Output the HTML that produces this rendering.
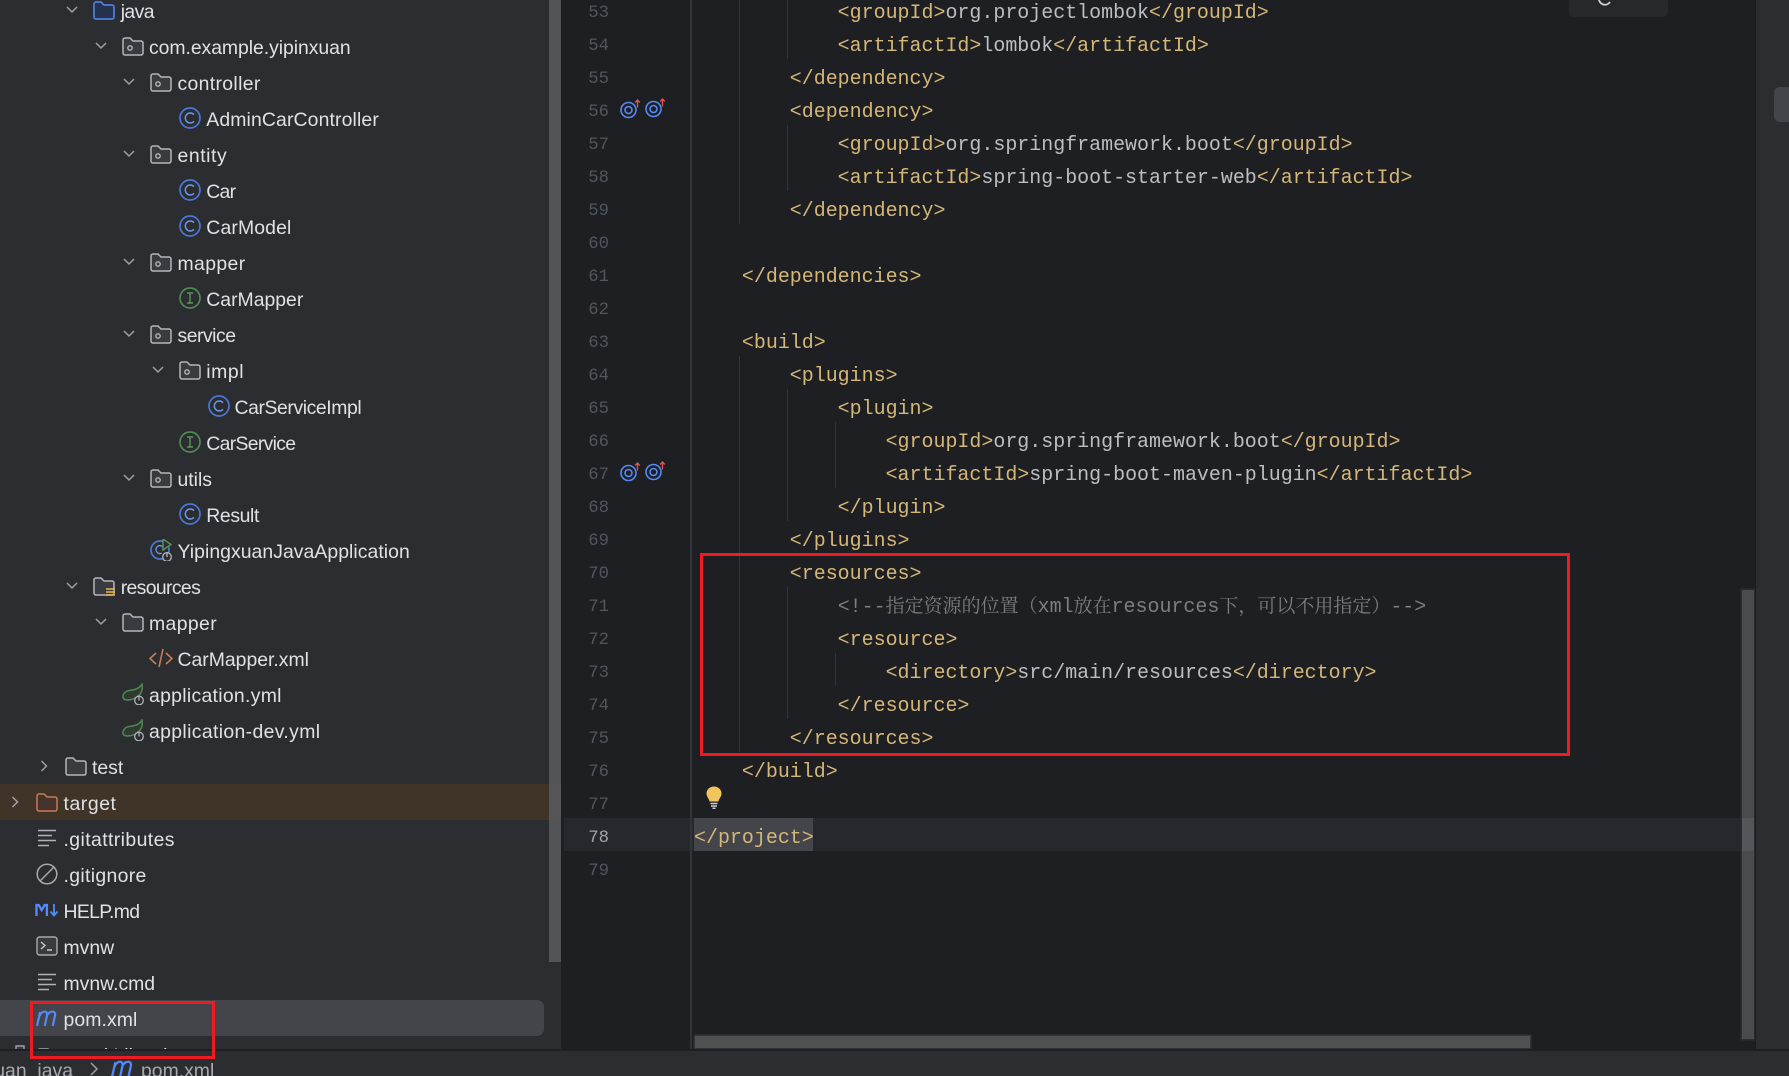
<!DOCTYPE html>
<html><head><meta charset="utf-8"><style>
html,body{margin:0;padding:0;background:#1e1f22}
#p{position:relative;width:1789px;height:1076px;overflow:hidden;background:#1e1f22}
#p>div,.a{position:absolute}
#side{left:0;top:0;width:561px;height:1049px;background:#2b2d30;overflow:hidden;font:19.4px "Liberation Sans",sans-serif;color:#dfe1e5}
.r{position:absolute;left:0;width:549px;height:36px;line-height:36px}
.r span{position:absolute;top:2px;white-space:pre}
.r svg{position:absolute;overflow:visible}
.ch{top:12px;width:12px;height:12px}
.i{top:7px;width:22px;height:22px}
#num{left:564px;top:-3px;width:45px;font:17.3px/33px "Liberation Mono",monospace;color:#50555e;text-align:right}
#num div{height:33px}
#code{left:694px;top:-4px;font:19.97px/33px "Liberation Mono",monospace;color:#d5b778}
#code div{height:33px;white-space:pre}
#code b{font-weight:normal;color:#bcbec4}
#code i{font-style:normal;color:#7a7e85;position:relative;top:-2px}
#code u{text-decoration:none;font:19px/33px "Noto Serif CJK SC","Liberation Mono",serif}
.g{background:#313438;width:1.5px}
.red{border:3px solid #ed1c24;box-sizing:border-box}
#bar{left:0;top:1051px;width:1789px;height:25px;background:#2b2d30;overflow:hidden;font:19.4px/40px "Liberation Sans",sans-serif;color:#a8aab1}
</style></head><body><div id="p">
<svg width="0" height="0" style="position:absolute"><defs>
<symbol id="d" viewBox="0 0 12 12"><path d="M1 3l5 5 5-5" fill="none" stroke="#9da0a8" stroke-width="1.5"/></symbol>
<symbol id="n" viewBox="0 0 12 12"><path d="M3.5 1l5 5-5 5" fill="none" stroke="#9da0a8" stroke-width="1.5"/></symbol>
<symbol id="f" viewBox="0 0 22 22"><path d="M1 5a2 2 0 0 1 2-2h5l3 3h8a2 2 0 0 1 2 2v10a2 2 0 0 1-2 2H3a2 2 0 0 1-2-2z" fill="#393b40" stroke="#b4b6bc" stroke-width="1.5"/></symbol>
<symbol id="k" viewBox="0 0 22 22"><path d="M1 5a2 2 0 0 1 2-2h5l3 3h8a2 2 0 0 1 2 2v10a2 2 0 0 1-2 2H3a2 2 0 0 1-2-2z" fill="#393b40" stroke="#b4b6bc" stroke-width="1.5"/><circle cx="8" cy="13" r="2.2" fill="none" stroke="#b4b6bc" stroke-width="1.4"/></symbol>
<symbol id="j" viewBox="0 0 22 22"><path d="M1 5a2 2 0 0 1 2-2h5l3 3h8a2 2 0 0 1 2 2v10a2 2 0 0 1-2 2H3a2 2 0 0 1-2-2z" fill="#25324d" stroke="#548af7" stroke-width="1.5"/></symbol>
<symbol id="t" viewBox="0 0 22 22"><path d="M1 5a2 2 0 0 1 2-2h5l3 3h8a2 2 0 0 1 2 2v10a2 2 0 0 1-2 2H3a2 2 0 0 1-2-2z" fill="#45322b" stroke="#c77d55" stroke-width="1.5"/></symbol>
<symbol id="c" viewBox="0 0 22 22"><circle cx="11" cy="11" r="10" fill="none" stroke="#4a78d8" stroke-width="1.7"/><path d="M15 7.6A5 5 0 1 0 15 14.4" fill="none" stroke="#6f9af0" stroke-width="1.4"/></symbol>
<symbol id="in" viewBox="0 0 22 22"><circle cx="11" cy="11" r="10" fill="none" stroke="#4f8a55" stroke-width="1.7"/><path d="M8 6h6M8 16h6M11 6v10" fill="none" stroke="#57965c" stroke-width="1.4"/></symbol>
<symbol id="app" viewBox="0 0 22 22"><circle cx="10" cy="11" r="9" fill="none" stroke="#4a78d8" stroke-width="1.7"/><path d="M13 8A4 4 0 1 0 12 14" fill="none" stroke="#6f9af0" stroke-width="1.3"/><path d="M13 0l8 5.500-8 5.500z" fill="#2b2d30" stroke="#57965c" stroke-width="1.4"/><circle cx="17" cy="18" r="4.300" fill="#2b2d30" stroke="#b4b6bc" stroke-width="1.3"/><path d="M17 14.500v3.500" stroke="#b4b6bc" stroke-width="1.3"/></symbol>
<symbol id="res" viewBox="0 0 22 22"><path d="M1 5a2 2 0 0 1 2-2h5l3 3h8a2 2 0 0 1 2 2v10a2 2 0 0 1-2 2H3a2 2 0 0 1-2-2z" fill="#393b40" stroke="#b4b6bc" stroke-width="1.5"/><path d="M13 14h9M13 17h9M13 20h9" stroke="#e8b84a" stroke-width="1.6"/></symbol>
<symbol id="x" viewBox="0 0 24 22"><path d="M7 6l-6 5.500 6 5.500M17 6l6 5.500-6 5.500M14 2L10 20" fill="none" stroke="#c77d55" stroke-width="1.6"/></symbol>
<symbol id="y" viewBox="0 0 22 22"><path d="M20 1c1 6-1 10-4 12-3 3-7 4-11 4-3 0-4.500-2-4-4 .5-3 3-5 6-5.500 5-.5 10-1.500 13-6.500z" fill="#303a30" stroke="#4f8a55" stroke-width="1.5"/><circle cx="17" cy="17.500" r="4.300" fill="#2b2d30" stroke="#b0b2b8" stroke-width="1.3"/><path d="M17 14v3.500" stroke="#b0b2b8" stroke-width="1.3"/></symbol>
<symbol id="lines" viewBox="0 0 22 22"><path d="M2 3.500h18M2 8.500h14M2 13.500h18M2 18.500h11" stroke="#b0b2b8" stroke-width="1.500"/></symbol>
<symbol id="no" viewBox="0 0 22 22"><circle cx="11" cy="11" r="9.800" fill="none" stroke="#a8aab1" stroke-width="1.500"/><path d="M4 18L18 4" stroke="#a8aab1" stroke-width="1.500"/></symbol>
<symbol id="md" viewBox="0 0 24 22"><path d="M1.500 17V6h2.200l3 5 3-5h2.200v11" fill="none" stroke="#548af7" stroke-width="2.300"/><path d="M19 5v11M15.500 12.500l3.500 4 3.500-4" fill="none" stroke="#548af7" stroke-width="1.800"/></symbol>
<symbol id="sh" viewBox="0 0 22 22"><rect x="1" y="2" width="20" height="18" rx="2.500" fill="#393b40" stroke="#a8aab1" stroke-width="1.400"/><path d="M5 7l4 3.500-4 3.500M11 15h5" fill="none" stroke="#c5c7cc" stroke-width="1.400"/></symbol>
<symbol id="m" viewBox="0 0 22 18"><path d="M1 17L4.200 3M3.700 6.500C6 1.500 12 1 11 6.500L8.700 17M11 6.500C13.500 1.500 20 1 19 6.500L16.700 17" fill="none" stroke="#548af7" stroke-width="2.200"/></symbol>
<symbol id="lib" viewBox="0 0 22 22"><path d="M1 20V7h7V3h8v17z" fill="#393b40" stroke="#9da0a8" stroke-width="1.400"/></symbol>
<symbol id="ov" viewBox="0 0 24 22"><circle cx="8.500" cy="11" r="7.500" fill="none" stroke="#548af7" stroke-width="1.600"/><circle cx="8.500" cy="11" r="3.500" fill="none" stroke="#548af7" stroke-width="1.600"/><path d="M17.500 8.500V1M15.200 3.500L17.500 1l2.300 2.500" fill="none" stroke="#e05555" stroke-width="1.300"/></symbol>
</defs></svg>

<div id="side">
<div class="a" style="left:0;top:784px;width:561px;height:36px;background:#403327"></div>
<div class="a" style="left:0;top:1000px;width:544px;height:36px;background:#43454a;border-radius:0 7px 7px 0"></div>
<div class="a" style="left:549px;top:0;width:12px;height:962px;background:#57585b;opacity:.92"></div>

<div class="r" style="top:-8px"><svg class="ch" style="left:66px"><use href="#d"/></svg><svg class="i" style="left:93px"><use href="#j"/></svg><span style="left:120.700px;letter-spacing:-.57px">java</span></div>
<div class="r" style="top:28px"><svg class="ch" style="left:95px"><use href="#d"/></svg><svg class="i" style="left:121.500px"><use href="#k"/></svg><span style="left:149px;letter-spacing:-.05px">com.example.yipinxuan</span></div>
<div class="r" style="top:64px"><svg class="ch" style="left:123px"><use href="#d"/></svg><svg class="i" style="left:150.300px"><use href="#k"/></svg><span style="left:177.500px;letter-spacing:.34px">controller</span></div>
<div class="r" style="top:100px"><svg class="i" style="left:178.500px"><use href="#c"/></svg><span style="left:206.300px;letter-spacing:.13px">AdminCarController</span></div>
<div class="r" style="top:136px"><svg class="ch" style="left:123px"><use href="#d"/></svg><svg class="i" style="left:150.300px"><use href="#k"/></svg><span style="left:177.500px;letter-spacing:.57px">entity</span></div>
<div class="r" style="top:172px"><svg class="i" style="left:178.500px"><use href="#c"/></svg><span style="left:206.300px;letter-spacing:-.76px">Car</span></div>
<div class="r" style="top:208px"><svg class="i" style="left:178.500px"><use href="#c"/></svg><span style="left:206.300px;letter-spacing:.14px">CarModel</span></div>
<div class="r" style="top:244px"><svg class="ch" style="left:123px"><use href="#d"/></svg><svg class="i" style="left:150.300px"><use href="#k"/></svg><span style="left:177.500px;letter-spacing:.38px">mapper</span></div>
<div class="r" style="top:280px"><svg class="i" style="left:178.500px"><use href="#in"/></svg><span style="left:206.300px">CarMapper</span></div>
<div class="r" style="top:316px"><svg class="ch" style="left:123px"><use href="#d"/></svg><svg class="i" style="left:150.300px"><use href="#k"/></svg><span style="left:177.500px;letter-spacing:-.49px">service</span></div>
<div class="r" style="top:352px"><svg class="ch" style="left:152px"><use href="#d"/></svg><svg class="i" style="left:178.500px"><use href="#k"/></svg><span style="left:206.300px;letter-spacing:.57px">impl</span></div>
<div class="r" style="top:388px"><svg class="i" style="left:207.500px"><use href="#c"/></svg><span style="left:234.500px;letter-spacing:-.41px">CarServiceImpl</span></div>
<div class="r" style="top:424px"><svg class="i" style="left:178.500px"><use href="#in"/></svg><span style="left:206.300px;letter-spacing:-.68px">CarService</span></div>
<div class="r" style="top:460px"><svg class="ch" style="left:123px"><use href="#d"/></svg><svg class="i" style="left:150.300px"><use href="#k"/></svg><span style="left:177.500px">utils</span></div>
<div class="r" style="top:496px"><svg class="i" style="left:178.500px"><use href="#c"/></svg><span style="left:206.300px;letter-spacing:-.38px">Result</span></div>
<div class="r" style="top:532px"><svg class="i" style="left:150.300px"><use href="#app"/></svg><span style="left:177.500px;letter-spacing:.05px">YipingxuanJavaApplication</span></div>
<div class="r" style="top:568px"><svg class="ch" style="left:66px"><use href="#d"/></svg><svg class="i" style="left:93px"><use href="#res"/></svg><span style="left:120.700px;letter-spacing:-.63px">resources</span></div>
<div class="r" style="top:604px"><svg class="ch" style="left:95px"><use href="#d"/></svg><svg class="i" style="left:121.500px"><use href="#f"/></svg><span style="left:149px;letter-spacing:.38px">mapper</span></div>
<div class="r" style="top:640px"><svg class="i" style="left:149px;width:24px"><use href="#x"/></svg><span style="left:177.500px">CarMapper.xml</span></div>
<div class="r" style="top:676px"><svg class="i" style="left:121.500px"><use href="#y"/></svg><span style="left:149px;letter-spacing:.3px">application.yml</span></div>
<div class="r" style="top:712px"><svg class="i" style="left:121.500px"><use href="#y"/></svg><span style="left:149px;letter-spacing:.36px">application-dev.yml</span></div>
<div class="r" style="top:748px"><svg class="ch" style="left:37.500px"><use href="#n"/></svg><svg class="i" style="left:64.500px"><use href="#f"/></svg><span style="left:92px">test</span></div>
<div class="r" style="top:784px"><svg class="ch" style="left:9px"><use href="#n"/></svg><svg class="i" style="left:36px"><use href="#t"/></svg><span style="left:63.500px;letter-spacing:.57px">target</span></div>
<div class="r" style="top:820px"><svg class="i" style="left:36px"><use href="#lines"/></svg><span style="left:63.500px;letter-spacing:.41px">.gitattributes</span></div>
<div class="r" style="top:856px"><svg class="i" style="left:36px"><use href="#no"/></svg><span style="left:63.500px;letter-spacing:.34px">.gitignore</span></div>
<div class="r" style="top:892px"><svg class="i" style="left:35px;width:24px"><use href="#md"/></svg><span style="left:63.500px;letter-spacing:-.65px">HELP.md</span></div>
<div class="r" style="top:928px"><svg class="i" style="left:36px"><use href="#sh"/></svg><span style="left:63.500px">mvnw</span></div>
<div class="r" style="top:964px"><svg class="i" style="left:36px"><use href="#lines"/></svg><span style="left:63.500px">mvnw.cmd</span></div>
<div class="r" style="top:1000px"><svg class="i" style="left:36px;top:9px;height:18px"><use href="#m"/></svg><span style="left:63.500px;letter-spacing:.1px">pom.xml</span></div>
<div class="r" style="top:1036px"><svg class="i" style="left:8px"><use href="#lib"/></svg><span style="left:37px">External Libraries</span></div>
</div>

<div style="left:564px;top:818px;width:1190px;height:33px;background:#26282e"></div>
<div style="left:690px;top:0;width:1.500px;height:1051px;background:#313438"></div>
<div style="left:694px;top:818px;width:119px;height:33px;background:#43454a"></div>

<div class="g" style="left:738.500px;top:0;height:224px"></div>
<div class="g" style="left:738.500px;top:356px;height:396px"></div>
<div class="g" style="left:786.500px;top:0;height:59px"></div>
<div class="g" style="left:786.500px;top:125px;height:66px"></div>
<div class="g" style="left:786.500px;top:389px;height:132px"></div>
<div class="g" style="left:786.500px;top:587px;height:132px"></div>
<div class="g" style="left:834.500px;top:422px;height:66px"></div>
<div class="g" style="left:834.500px;top:653px;height:33px"></div>

<div id="num"><div>53</div><div>54</div><div>55</div><div>56</div><div>57</div><div>58</div><div>59</div><div>60</div><div>61</div><div>62</div><div>63</div><div>64</div><div>65</div><div>66</div><div>67</div><div>68</div><div>69</div><div>70</div><div>71</div><div>72</div><div>73</div><div>74</div><div>75</div><div>76</div><div>77</div><div style="color:#a1a3ab">78</div><div>79</div></div>

<svg class="a" style="left:620px;top:99px" width="24" height="22"><use href="#ov"/></svg>
<svg class="a" style="left:645px;top:98px" width="24" height="22"><use href="#ov"/></svg>
<svg class="a" style="left:620px;top:462px" width="24" height="22"><use href="#ov"/></svg>
<svg class="a" style="left:645px;top:461px" width="24" height="22"><use href="#ov"/></svg>

<svg class="a" style="left:706px;top:786px" width="16" height="23" viewBox="0 0 16 23"><path d="M8 .5C3.500.500.500 3.800.500 7.500c0 3.500 2.700 5 3 8h9c.3-3 3-4.500 3-8C15.500 3.800 12.500.500 8 .5z" fill="#f2c55c"/><path d="M4.500 17.500h7M5 20h6M6.500 22.300h3" stroke="#ced0d6" stroke-width="1.500"/></svg>

<div id="code"><div>            &lt;groupId&gt;<b>org.projectlombok</b>&lt;/groupId&gt;</div><div>            &lt;artifactId&gt;<b>lombok</b>&lt;/artifactId&gt;</div><div>        &lt;/dependency&gt;</div><div>        &lt;dependency&gt;</div><div>            &lt;groupId&gt;<b>org.springframework.boot</b>&lt;/groupId&gt;</div><div>            &lt;artifactId&gt;<b>spring-boot-starter-web</b>&lt;/artifactId&gt;</div><div>        &lt;/dependency&gt;</div><div> </div><div>    &lt;/dependencies&gt;</div><div> </div><div>    &lt;build&gt;</div><div>        &lt;plugins&gt;</div><div>            &lt;plugin&gt;</div><div>                &lt;groupId&gt;<b>org.springframework.boot</b>&lt;/groupId&gt;</div><div>                &lt;artifactId&gt;<b>spring-boot-maven-plugin</b>&lt;/artifactId&gt;</div><div>            &lt;/plugin&gt;</div><div>        &lt;/plugins&gt;</div><div>        &lt;resources&gt;</div><div>            <i>&lt;!--<u>指定资源的位置（</u>xml<u>放在</u>resources<u>下，可以不用指定）</u>--&gt;</i></div><div>            &lt;resource&gt;</div><div>                &lt;directory&gt;<b>src/main/resources</b>&lt;/directory&gt;</div><div>            &lt;/resource&gt;</div><div>        &lt;/resources&gt;</div><div>    &lt;/build&gt;</div><div> </div><div>&lt;/project&gt;</div><div> </div></div>

<div class="red" style="left:700px;top:553px;width:870px;height:203px"></div>

<div style="left:1569px;top:-10px;width:99px;height:27px;background:#27282b;border-radius:5px"></div>
<svg class="a" style="left:1598px;top:-8px" width="14" height="14" viewBox="0 0 14 14"><path d="M1 6a6 6 0 0 0 11 4" fill="none" stroke="#ced0d6" stroke-width="1.800"/></svg>

<div style="left:1742px;top:590px;width:12px;height:449px;background:#4a4b4d;box-shadow:0 0 0 1.500px #2c2d30"></div>
<div style="left:1742px;top:818px;width:12px;height:33px;background:#54565b"></div>
<div style="left:695px;top:1036px;width:835px;height:12px;background:#4f5052;box-shadow:0 0 0 1.500px #333437"></div>

<div style="left:1755px;top:0;width:1px;height:1049px;background:#1b1c1f"></div>
<div style="left:1756px;top:0;width:33px;height:1049px;background:#2b2d30"></div>
<div style="left:1774px;top:87px;width:20px;height:35px;background:#43454a;border-radius:6px"></div>

<div class="red" style="left:30px;top:1001px;width:185px;height:58px;z-index:5"></div>

<div style="left:0;top:1049px;width:1789px;height:2px;background:#1e1f22"></div>
<div id="bar">
<span class="a" style="right:1716px;top:0;white-space:pre">yipinxuan_java</span>
<svg class="a" style="left:88px;top:11px" width="12" height="14" viewBox="0 0 12 14"><path d="M3 1l6 6-6 6" fill="none" stroke="#9da0a8" stroke-width="1.500"/></svg>
<svg class="a" style="left:111px;top:8px" width="23" height="19"><use href="#m"/></svg>
<span class="a" style="left:141px;top:0">pom.xml</span>
</div>
</div></body></html>
